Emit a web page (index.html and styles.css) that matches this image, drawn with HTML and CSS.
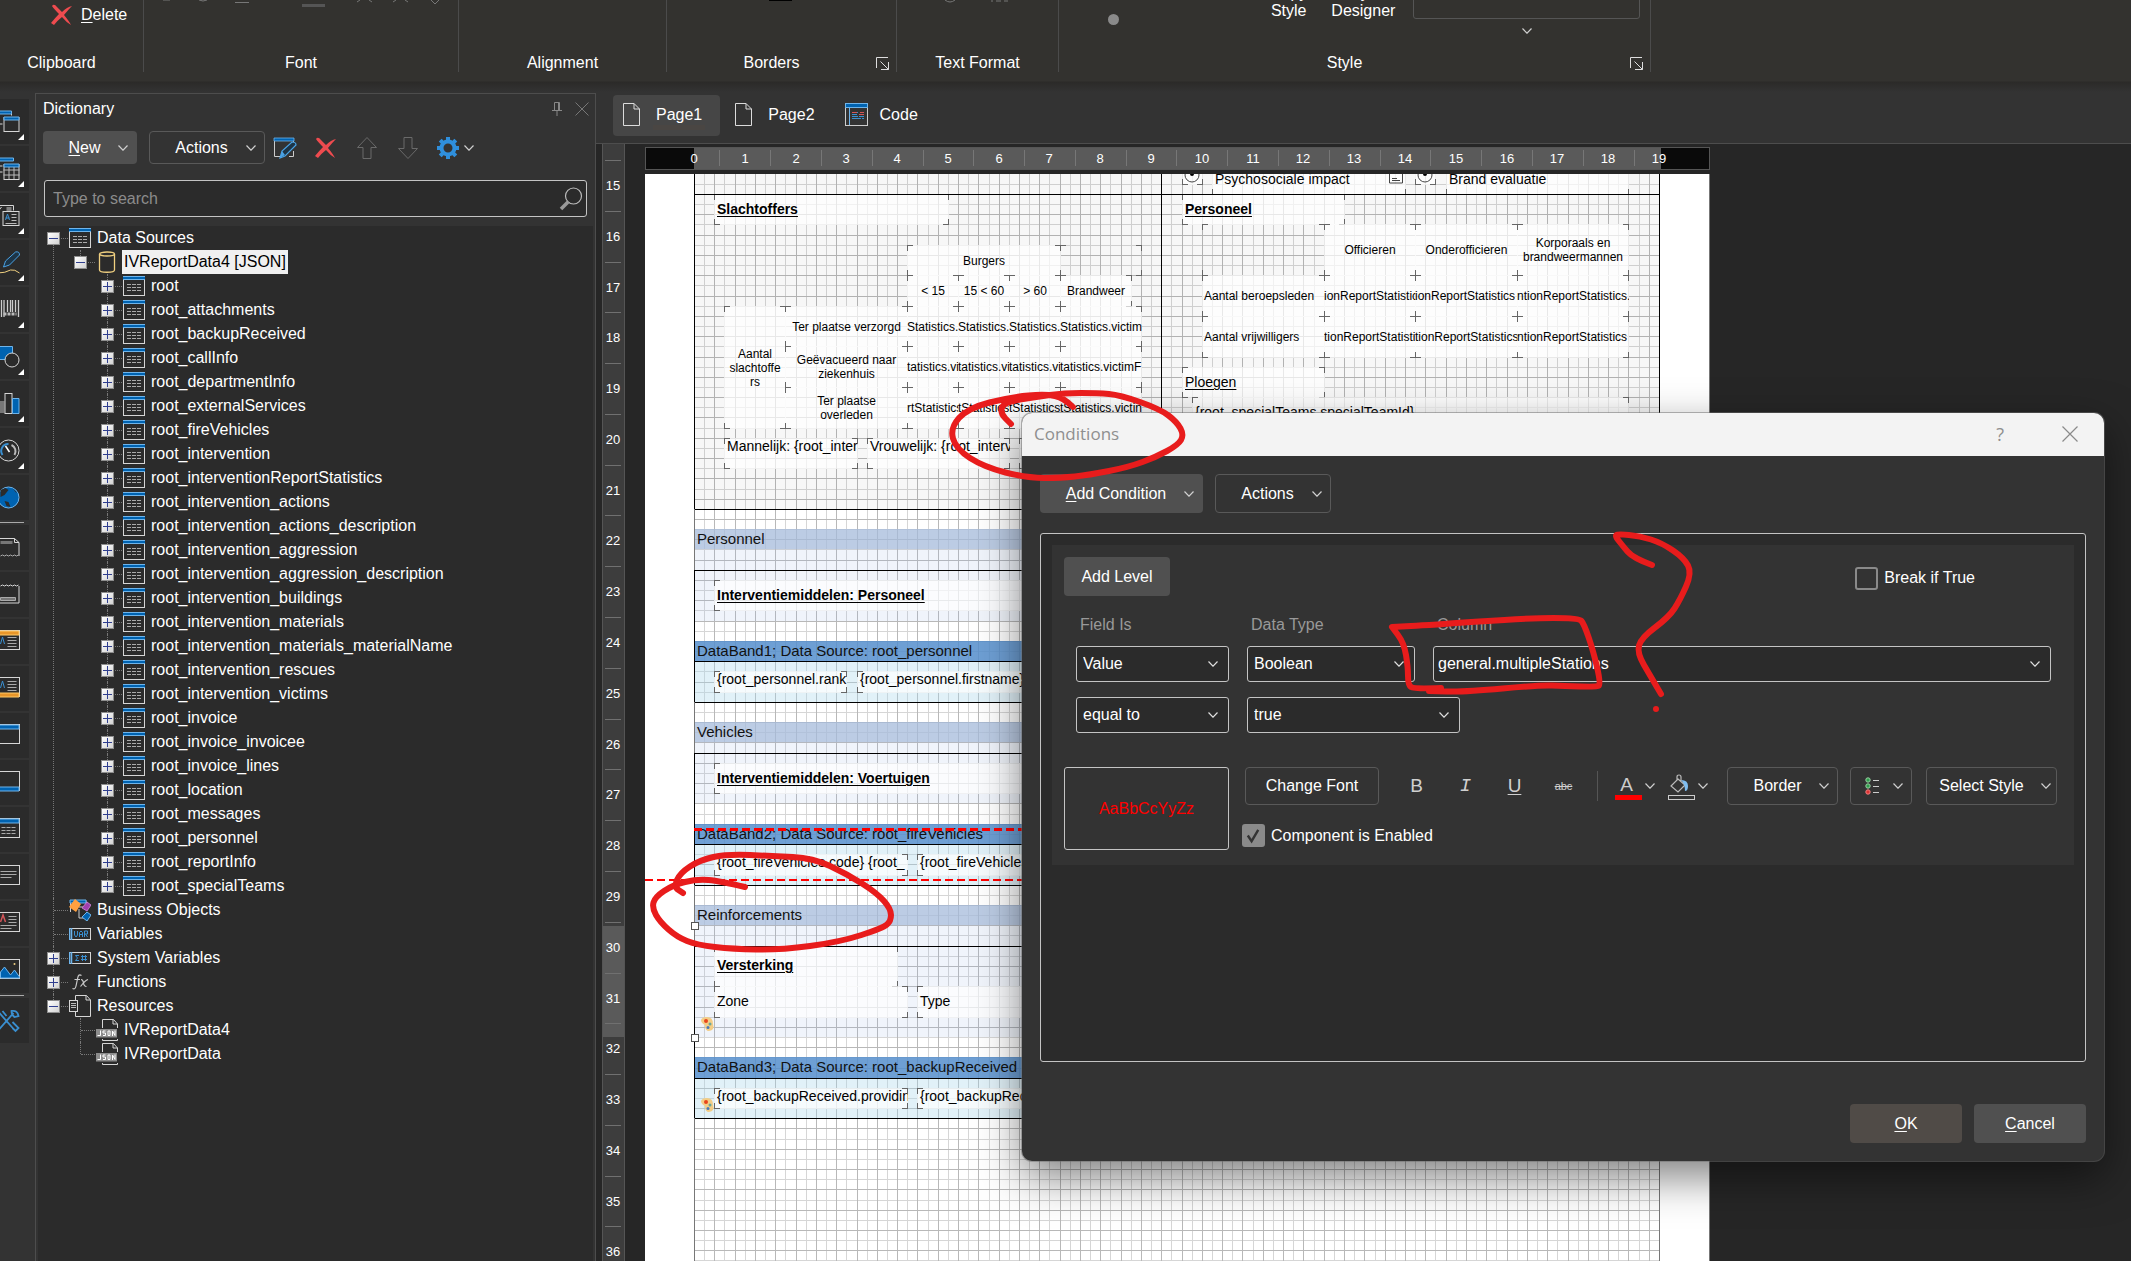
FILE: index.html
```html
<!DOCTYPE html>
<html lang="en">
<head>
    <meta charset="UTF-8">
    <meta name="viewport" content="width=device-width, initial-scale=1.0">
    <title>Report Designer - Conditions</title>
    <link rel="stylesheet" href="styles.css">
</head>
<body>
    <!-- Shared icons -->
    <svg class="sprite" aria-hidden="true">
        <symbol id="i-chevron" viewBox="0 0 10 6"><path d="M.5.5 5 5.2 9.5.5" fill="none" stroke="currentColor" stroke-width="1.2"/></symbol>
        <symbol id="i-cross" viewBox="0 0 22 22"><path d="M1 2Q3-1 6 3L11 8Q16 3 21 2 17 6 13 11 18 17 20 21 15 18 11 13 7 16 3 21L0 19Q4 14 8 10 3 5 1 2Z" fill="#ee4b4f"/></symbol>
        <symbol id="i-table" viewBox="0 0 22 22"><rect x=".5" y="1.5" width="21" height="19" fill="none" stroke="#d6d6d6"/><path d="M0 1h22v4H0z" fill="#0063b1"/><path d="M0 1.5h22M0 4.5h22" stroke="#6fb4ea"/><path d="M4 9.500h14M4 12.500h14M4 15.500h14" stroke="#aaa" stroke-dasharray="4 1"/></symbol>
        <symbol id="i-db" viewBox="0 0 22 22"><path d="M3.500 3v16c0 3 15 3 15 0V3" fill="none" stroke="#f0d080" stroke-width="1.3"/><ellipse cx="11" cy="3" rx="7.500" ry="2" fill="none" stroke="#f0d080" stroke-width="1.300"/></symbol>
        <symbol id="i-bo" viewBox="0 0 22 22"><path d="M1.500 13V1.500H17V4M10 10v9h6M10 8h6" fill="none" stroke="#ccc"/><path d="M1 1h16v3H1z" fill="#0063b1" stroke="#6fb4ea"/><path d="M6 0l6 5-5 8-7-5z" fill="#ffa040"/><path d="M18 3l4 3-4 6-5-3z" fill="#a03fae" stroke="#d58ade" stroke-width=".8"/><path d="M18 13l4 3-4 6-5-4z" fill="#0063b1" stroke="#6fb4ea"/></symbol>
        <symbol id="i-var" viewBox="0 0 22 22"><rect x=".5" y="5.500" width="21" height="11" fill="none" stroke="#d6d6d6"/><path d="M.5 5v12M2.500 5v12" stroke="#6fb4ea" stroke-width="1.500"/><path d="M5.500 8v4l1.500 2 1.500-2V8M10.500 14V9.500L12 8l1.500 1.500V14M10.500 11.500h3M15.500 14V8h3v3h-3m1 0 2 3" fill="none" stroke="#3a8fd0"/></symbol>
        <symbol id="i-sys" viewBox="0 0 22 22"><rect x=".5" y="5.500" width="21" height="11" fill="none" stroke="#d6d6d6"/><path d="M.5 5v12M2.500 5v12" stroke="#6fb4ea" stroke-width="1.500"/><path d="M10 8.500H6.500L8.500 11l-2 2.500H10M13.500 8v6M16.500 8v6M12 9.500h6M12 12.500h6" fill="none" stroke="#3a8fd0"/></symbol>
        <symbol id="i-fx" viewBox="0 0 22 22"><path d="M12.500 4.500Q9.500 2.500 8.700 7L7 15q-.8 4-3.500 2.500M5.500 8.500h5.500M12 8.500q2 0 2.500 3.500t3 3.500M19 8.500q-3 1-7.500 7" fill="none" stroke="#ccc" stroke-width="1.200"/></symbol>
        <symbol id="i-res" viewBox="0 0 22 22"><path d="M6.500 5V.5h11l4 4.500v16.500h-15V17M17 .5V5h4.500" fill="none" stroke="#d6d6d6"/><rect x=".5" y="5.500" width="8" height="11" fill="none" stroke="#d6d6d6"/><path d="M2 8.500h5M2 10.500h5M2 12.500h5" stroke="#bbb"/></symbol>
        <symbol id="i-json" viewBox="0 0 22 22"><path d="M6.500 9V.5h11l4 4.500v4M17 .5V5h4.500M6.500 20v1.500h15V20" fill="none" stroke="#d6d6d6"/><path d="M0 10h21v8.500H0z" fill="#8c8c8c"/><path d="M4.500 11.500v5h-3M9.500 12H7v2h2.500v2.500H7M12 12h2v4.500h-2zM16.500 17v-5l2.500 4.500v-5" fill="none" stroke="#fff"/></symbol>
        <symbol id="i-page" viewBox="0 0 17 23"><path d="M.5.5h10.500l5.500 5.500v16.500H.5zM11 .5V6h5.500" fill="none" stroke="#dcdcdc"/></symbol>
        <symbol id="i-launch" viewBox="0 0 13 13"><path d="M.5 11V.5H12M5 12.500h7.500V5M4.500 4.500l8 8" fill="none" stroke="#ddd"/></symbol>
        <symbol id="i-corner" viewBox="0 0 6 6"><path d="M6 0v6H0z" fill="#fff"/></symbol>
    </svg>

    <header class="ribbon">
        <section class="group clipboard">
            <button class="ribbon-btn"><svg width="22" height="22"><use href="#i-cross"/></svg><span><u>D</u>elete</span></button>
            <h2>Clipboard</h2>
        </section>
        <section class="group font">
            <svg class="cut-icons" width="300" height="10" aria-hidden="true"><path d="M19 0h7M55 0q4 2 8 0M91 2.500h14M216 0l-3 2M225 0l3 2M252 0l-3 2M261 0l3 2M287 0l4 4 4-4" fill="none" stroke="#777"/><path d="M158 4h23v3h-23z" fill="#555"/></svg>
            <h2>Font</h2>
        </section>
        <section class="group alignment"><h2>Alignment</h2></section>
        <section class="group borders">
            <svg class="cut-icons" width="200" height="4" aria-hidden="true"><path d="M102 0h23v1h-23z" fill="#000"/></svg>
            <h2>Borders</h2>
            <button class="launcher" aria-label="Border settings"><svg width="13" height="13"><use href="#i-launch"/></svg></button>
        </section>
        <section class="group format">
            <svg class="cut-icons" width="150" height="4" aria-hidden="true"><path d="M48 0q5 4 10 0M94 1h2M99 1h5M107 1h4" fill="none" stroke="#777"/></svg>
            <h2>Text Format</h2>
        </section>
        <section class="group style">
            <div class="style-tools">
                <span class="bullet"></span>
                <button>Copy<br>Style</button>
                <button>Style<br>Designer</button>
                <div class="gallery">
                    <div class="gallery-box"></div>
                    <svg class="chev" width="10" height="6"><use href="#i-chevron"/></svg>
                </div>
            </div>
            <h2>Style</h2>
            <button class="launcher" aria-label="Style settings"><svg width="13" height="13"><use href="#i-launch"/></svg></button>
        </section>
    </header>

    <main class="workspace">
        <nav class="toolbox" id="toolbox" aria-label="Toolbox"></nav>

        <aside class="dictionary">
            <div class="panel-title">
                <h1>Dictionary</h1>
                <svg width="10" height="14" viewBox="0 0 10 14"><path d="M2.500.5h5V8M2.500.5V8M0 8.500h10M5 9v5" fill="none" stroke="#888"/><path d="M6 1h1v7H6z" fill="#888"/></svg>
                <svg width="14" height="14" viewBox="0 0 14 14"><path d="M.5.5l13 13M13.500.5l-13 13" stroke="#777"/></svg>
            </div>
            <div class="panel-tools">
                <button class="btn solid new"><span><u>N</u>ew</span><svg class="chev" width="10" height="6"><use href="#i-chevron"/></svg></button>
                <button class="btn outline act"><span>Actions</span><svg class="chev" width="10" height="6"><use href="#i-chevron"/></svg></button>
                <button class="tool" aria-label="Edit"><svg width="24" height="24" viewBox="0 0 24 24"><path d="M9 20.500H1.500V3.500h19V6M20.500 15v5.500H16" fill="none" stroke="#ccc"/><path d="M1 2h20v3H1z" fill="#0063b1" stroke="#6fb4ea" stroke-width=".8"/><path d="M7 22l2-7L19 6q4 0 4 3L12 20z" fill="#1d3547" stroke="#4aa3e6" stroke-width="1.200"/><path d="M9 15l3 4-5 3z" fill="#4aa3e6"/></svg></button>
                <button class="tool" aria-label="Delete"><svg width="22" height="22"><use href="#i-cross"/></svg></button>
                <button class="tool" aria-label="Move up"><svg width="22" height="24" viewBox="0 0 22 24"><path d="M11 1.500l9.500 10H15v11H7v-11H1.500z" fill="none" stroke="#6a6a6a"/></svg></button>
                <button class="tool" aria-label="Move down"><svg width="22" height="24" viewBox="0 0 22 24"><path d="M11 22.500l9.500-10H15v-11H7v11H1.500z" fill="none" stroke="#6a6a6a"/></svg></button>
                <button class="tool gear" aria-label="Settings"><svg width="22" height="22" viewBox="-11 -11 22 22"><circle r="6.500" fill="none" stroke="#2f8fdc" stroke-width="4"/><path d="M0-11V-7M0 7V11M-11 0H-7M7 0H11M-7.800-7.800-5-5M5 5 7.800 7.800M7.800-7.800 5-5M-5 5-7.800 7.800" stroke="#2f8fdc" stroke-width="4"/></svg><svg class="chev" width="10" height="6"><use href="#i-chevron"/></svg></button>
            </div>
            <label class="search">
                <input type="search" placeholder="Type to search" aria-label="Type to search">
                <svg width="24" height="24" viewBox="0 0 24 24"><circle cx="14.500" cy="9" r="8" fill="none" stroke="#bbb" stroke-width="1.200"/><path d="M9 15l-7 7" stroke="#999" stroke-width="3.500"/></svg>
            </label>
            <div class="tree" id="tree"></div>
        </aside>

        <section class="designer">
            <div class="tabs">
                <button class="tab active"><svg width="17" height="23"><use href="#i-page"/></svg><span>Page1</span></button>
                <button class="tab"><svg width="17" height="23"><use href="#i-page"/></svg><span>Page2</span></button>
                <button class="tab code"><svg width="23" height="23" viewBox="0 0 23 23"><rect x=".5" y=".5" width="22" height="22" fill="none" stroke="#ccc"/><path d="M.5.500h22v4H.5z" fill="#0063b1" stroke="#6fb4ea"/><path d="M4.500 5v17" stroke="#6fb4ea"/><path d="M7 9.500h6M7 11.500h5M7 13.500h6M7 15.500h9M14 13.500h5M17 15.500h2" stroke="#3a8fd0"/><path d="M15 9.500h4M14 11.500h5M7 9.500h5" stroke="#d4565a"/></svg><span>Code</span></button>
            </div>
            <div class="surface">
                <svg class="v-ruler" id="vRuler" width="23" height="1117"></svg>
                <div class="canvas">
                    <svg class="h-ruler" id="hRuler" width="1065" height="23"></svg>
                    <div class="page" id="page"></div>
                </div>
            </div>
        </section>
    </main>

    <div class="dialog" role="dialog" aria-labelledby="dlgTitle">
        <div class="dialog-bar">
            <h2 id="dlgTitle">Conditions</h2>
            <button aria-label="Help">?</button>
            <button aria-label="Close"><svg width="16" height="16" viewBox="0 0 16 16"><path d="M.5.5l15 15M15.500.5l-15 15" stroke="#8a8a8a" stroke-width="1.200"/></svg></button>
        </div>
        <div class="dialog-body">
            <div class="row">
                <button class="btn tall solid add"><span><u>A</u>dd Condition</span><svg class="chev" width="10" height="6"><use href="#i-chevron"/></svg></button>
                <button class="btn tall outline act"><span>Actions</span><svg class="chev" width="10" height="6"><use href="#i-chevron"/></svg></button>
            </div>
            <div class="conditions">
                <div class="card">
                    <div class="row card-top">
                        <button class="btn tall solid level">Add Level</button>
                        <label class="check break"><input type="checkbox">Break if True</label>
                    </div>
                    <div class="fields">
                        <label for="fieldIs">Field Is</label>
                        <label for="dataType">Data Type</label>
                        <label for="column">Column</label>
                        <select id="fieldIs"><option>Value</option></select>
                        <select id="dataType"><option>Boolean</option></select>
                        <select id="column"><option>general.multipleStations</option></select>
                    </div>
                    <div class="fields second">
                        <select aria-label="Operation"><option>equal to</option></select>
                        <select aria-label="Value"><option>true</option></select>
                    </div>
                    <div class="format-row">
                        <div class="preview">AaBbCcYyZz</div>
                        <div class="format-tools">
                            <div class="row">
                                <button class="btn outline font-btn">Change Font</button>
                                <button class="glyph"><b>B</b></button>
                                <button class="glyph italic">I</button>
                                <button class="glyph"><u>U</u></button>
                                <button class="glyph strike"><s>abc</s></button>
                                <span class="divider"></span>
                                <button class="color"><span class="letter">A</span><svg class="chev" width="10" height="6"><use href="#i-chevron"/></svg></button>
                                <button class="color"><svg width="27" height="28" viewBox="0 0 27 28"><path d="M9 8V5q0-2 2-2t2 2v5M10 7l7 6-7 7-7-6z" fill="none" stroke="#bbb" stroke-width="1.200"/><path d="M13 8q7 0 7 6 0 5-3 5 0-7-4-11z" fill="#7fbdf0"/><rect x=".5" y="23.500" width="26" height="4" fill="none" stroke="#ccc"/></svg><svg class="chev" width="10" height="6"><use href="#i-chevron"/></svg></button>
                                <button class="btn outline border-btn"><span>Border</span><svg class="chev" width="10" height="6"><use href="#i-chevron"/></svg></button>
                                <button class="btn outline list-btn" aria-label="Icon set"><svg width="14" height="18" viewBox="0 0 14 18"><g stroke="#9bd0a5"><circle cx="3" cy="3" r="2.200" fill="#2f9e4b"/><circle cx="3" cy="9" r="2.200" fill="#2f9e4b"/></g><circle cx="3" cy="15" r="2.200" fill="#d33" stroke="#f08080"/><path d="M8 3.500h6M8 9.500h6M8 15.500h6" stroke="#ccc"/></svg><svg class="chev" width="10" height="6"><use href="#i-chevron"/></svg></button>
                                <button class="btn outline style-btn"><span>Select Style</span><svg class="chev" width="10" height="6"><use href="#i-chevron"/></svg></button>
                            </div>
                            <label class="check"><input type="checkbox" checked>Component is Enabled</label>
                        </div>
                    </div>
                </div>
            </div>
            <div class="dialog-actions">
                <button class="btn tall ok"><span><u>O</u>K</span></button>
                <button class="btn tall solid"><span><u>C</u>ancel</span></button>
            </div>
        </div>
    </div>

    <svg class="ink" id="ink" aria-hidden="true"></svg>

    <script src="script.js"></script>
</body>
</html>
```
FILE: styles.css
```css
* {
    box-sizing: border-box;
    margin: 0;
    padding: 0;
}
body {
    font: 16px/18px "Liberation Sans", Arial, sans-serif;
    background: #333;
    color: #fff;
    height: 100vh;
    overflow: hidden;
    display: flex;
    flex-direction: column;
    position: relative;
}
h1, h2 {
    font-size: 16px;
    font-weight: 400;
}
button {
    font: inherit;
    color: inherit;
    background: none;
    border: 0;
    white-space: nowrap;
}
svg {
    display: block;
    flex: none;
}
u {
    text-underline-offset: 2px;
}
.sprite {
    position: absolute;
    width: 0;
    height: 0;
}
.chev {
    color: #d0d0d0;
}

/* Ribbon */
.ribbon {
    height: 93px;
    flex: none;
    display: flex;
    background: linear-gradient(#33322f 81px, #2b2a28 82px, #333 92px);
}
.group {
    height: 72px;
    border-right: 1px solid #4b4b4b;
    display: flex;
    align-items: flex-end;
    justify-content: center;
    position: relative;
}
.clipboard { width: 144px; padding-right: 20px; }
.font { width: 315px; }
.alignment { width: 208px; }
.borders { width: 230px; padding-right: 20px; }
.format { width: 162px; }
.style { width: 592px; padding-right: 20px; }
.ribbon-btn {
    position: absolute;
    top: 4px;
    left: 51px;
    display: flex;
    gap: 8px;
    align-items: center;
}
.cut-icons {
    position: absolute;
    top: 0;
    left: 0;
}
.launcher {
    position: absolute;
    right: 7px;
    bottom: 2px;
}
.style-tools {
    position: absolute;
    top: -16px;
    left: 49px;
    right: 10px;
    display: flex;
}
.style-tools button {
    padding: 0 12px;
    line-height: 18px;
    height: 36px;
}
.bullet {
    width: 11px;
    height: 11px;
    border-radius: 50%;
    background: #8a8a8a;
    margin: 30px 139px 0 0;
}
.gallery {
    flex: 1;
    margin-left: 6px;
    color: #ccc;
}
.gallery-box {
    height: 35px;
    border: 1px solid #555;
    border-radius: 3px;
    margin-bottom: 9px;
}
.gallery .chev {
    margin: 0 auto;
}

/* Workspace */
.workspace {
    flex: 1;
    display: flex;
    min-height: 0;
}
.toolbox {
    width: 35px;
    padding-top: 6px;
    flex: none;
}
.tile {
    display: block;
    width: 29px;
    height: 45px;
    margin-bottom: 2px;
    background: #2b2b2b;
    position: relative;
}
.tile .more {
    position: absolute;
    left: 18px;
    top: 35px;
}
.tool-line {
    width: 24px;
    height: 1px;
    background: #aaa;
    margin: 1px 0 2px;
}

/* Dictionary */
.dictionary {
    width: 561px;
    flex: none;
    border: 1px solid #4d4d4d;
    border-bottom: 0;
    display: flex;
    flex-direction: column;
}
.panel-title {
    display: flex;
    align-items: center;
    gap: 13px;
    padding: 6px 6px 0 7px;
}
.panel-title h1 {
    flex: 1;
}
.panel-tools {
    display: flex;
    align-items: center;
    margin: 13px 0 16px 7px;
}
.btn {
    height: 33px;
    border-radius: 4px;
    display: flex;
    align-items: center;
    justify-content: center;
}
.btn.tall {
    height: 39px;
}
.solid {
    background: #505050;
}
.outline {
    border: 1px solid #595959;
}
.new {
    width: 94px;
    gap: 17px;
    padding-left: 16px;
    margin-right: 12px;
}
.act {
    width: 116px;
    gap: 18px;
    padding-left: 17px;
}
.tool {
    width: 24px;
    margin-left: 17px;
    display: flex;
    align-items: center;
    justify-content: center;
}
.act + .tool {
    margin-left: 8px;
}
.gear {
    width: 38px;
    gap: 5px;
    margin-left: 16px;
}
.search {
    display: flex;
    align-items: center;
    margin: 0 8px 9px 8px;
    height: 37px;
    border: 1px solid #c4c4c4;
    border-radius: 3px;
    background: #2b2b2b;
    padding: 0 3px 0 8px;
}
.search input {
    flex: 1;
    background: none;
    border: 0;
    outline: 0;
    font: inherit;
    color: #fff;
}
.search input::placeholder {
    color: #8c8c8c;
}
.tree {
    flex: 1;
    background: #2b2b2b;
    margin: 0 2px;
    padding-left: 9px;
    overflow: hidden;
}
.tree ul {
    list-style: none;
}
.tree ul ul {
    margin-left: 27px;
}
.tree li {
    position: relative;
}
.tree li::before {
    content: "";
    position: absolute;
    left: 6px;
    top: 0;
    bottom: 0;
    border-left: 1px dotted #777;
}
.tree li:last-child::before {
    bottom: auto;
    height: 12px;
}
.tree > ul > li:first-child::before {
    top: 12px;
}
.node {
    height: 24px;
    display: flex;
    align-items: center;
    position: relative;
    padding-left: 22px;
    gap: 4px;
}
.node::before {
    content: "";
    position: absolute;
    left: 7px;
    width: 14px;
    top: 12px;
    border-top: 1px dotted #777;
}
.toggle {
    position: absolute;
    left: 0;
    top: 6px;
    width: 13px;
    height: 13px;
    background: linear-gradient(#2f3e8f, #2f3e8f) 50% 50% / 9px 1px no-repeat, linear-gradient(135deg, #fff, #d2d2d2);
    border: 1px solid #8e8e8e;
}
.toggle.plus {
    background: linear-gradient(#2f3e8f, #2f3e8f) 50% 50% / 9px 1px no-repeat, linear-gradient(#2f3e8f, #2f3e8f) 50% 50% / 1px 9px no-repeat, linear-gradient(135deg, #fff, #d2d2d2);
}
.node span {
    padding: 0 2px;
    line-height: 24px;
}
.node .selected {
    background: #f0f0f0;
    color: #000;
}

/* Designer */
.designer {
    flex: 1;
    min-width: 0;
    display: flex;
    flex-direction: column;
}
.tabs {
    height: 51px;
    border-bottom: 1px solid #4d4d4d;
    display: flex;
    padding: 2px 0 0 17px;
    gap: 5px;
}
.tab {
    height: 41px;
    padding: 0 18px 2px 10px;
    border-radius: 4px;
    display: flex;
    align-items: center;
    gap: 16px;
}
.tab.active {
    background: linear-gradient(#4a4643, #4a4643) 40px 30px / 52px 5px no-repeat, #464646;
}
.tab.code {
    gap: 12px;
    padding-left: 7px;
}
.surface {
    flex: 1;
    min-height: 0;
    overflow: hidden;
    background: #262626;
    display: flex;
    gap: 20px;
    padding-left: 6px;
}
.canvas {
    display: flex;
    flex-direction: column;
    padding-top: 3px;
    gap: 4px;
}
.page {
    flex: 1;
    background: #fff;
    border-right: 1px solid #777;
    position: relative;
    overflow: hidden;
    color: #000;
    font-size: 14px;
    line-height: 16px;
}
.band, .comp, .page svg, .rule {
    position: absolute;
}
.band {
    font-size: 15px;
    line-height: 19px;
    padding-left: 3px;
    white-space: nowrap;
    color: #111;
}
.band.panel { background: rgba(60, 60, 60, 0.04); }
.band.group-head { background: rgba(166, 187, 219, 0.75); }
.band.group-body { background: rgba(150, 175, 225, 0.14); }
.band.data-head { background: rgba(85, 142, 205, 0.85); }
.band.data-body { background: rgba(170, 215, 235, 0.35); }
.rule { background: #000; }
.rule.soft { background: #777; }
.comp {
    overflow: hidden;
    white-space: nowrap;
    background: rgba(255, 255, 255, 0.7);
    padding: 7px 3px 0;
}
.comp::after {
    content: "";
    position: absolute;
    inset: 0;
    --c: linear-gradient(#666, #666);
    background:
        var(--c) 0 0 / 6px 1px, var(--c) 0 0 / 1px 6px,
        var(--c) 100% 0 / 6px 1px, var(--c) 100% 0 / 1px 6px,
        var(--c) 0 100% / 6px 1px, var(--c) 0 100% / 1px 6px,
        var(--c) 100% 100% / 6px 1px, var(--c) 100% 100% / 1px 6px;
    background-repeat: no-repeat;
}
.comp.empty {
    background: none;
}
.comp.title {
    font-weight: 700;
    text-decoration: underline;
    text-underline-offset: 2px;
}
.comp.low {
    padding-top: 11px;
}
.comp.under {
    text-decoration: underline;
    text-underline-offset: 2px;
}
.comp.line {
    padding: 0 3px;
}
.comp.cell, .comp.data, .comp.left {
    font-size: 12px;
    line-height: 14px;
    display: flex;
    align-items: center;
    justify-content: center;
    text-align: center;
    padding: 0;
}
.comp.cell {
    white-space: pre-line;
}
.comp.data, .comp.left {
    justify-content: flex-start;
}
.comp.left {
    padding-left: 2px;
}
.cutline {
    position: absolute;
    background: repeating-linear-gradient(90deg, #f00 0 8px, transparent 8px 12px);
}
.handle {
    position: absolute;
    width: 8px;
    height: 8px;
    background: #fff;
    border: 1px solid #555;
}

/* Conditions dialog */
.dialog {
    position: absolute;
    left: 1022px;
    top: 413px;
    width: 1082px;
    background: #333;
    border-radius: 10px;
    overflow: hidden;
    box-shadow: 0 0 0 1px rgba(110, 110, 110, 0.5), 0 16px 44px rgba(0, 0, 0, 0.5);
}
.dialog-bar {
    height: 43px;
    background: #f3f3f3;
    color: #8f8f8f;
    display: flex;
    align-items: center;
    padding: 0 26px 2px 12px;
    font-family: "Open Sans", sans-serif;
}
.dialog-bar h2 {
    flex: 1;
    font-size: 17px;
}
.dialog-bar button {
    margin-left: 58px;
    font-size: 18px;
}
.dialog-body {
    padding: 18px 18px;
}
.row {
    display: flex;
    align-items: center;
}
.add {
    width: 163px;
    gap: 18px;
    padding-left: 17px;
    margin-right: 12px;
}
.conditions {
    margin: 20px 0 42px;
    height: 529px;
    border: 1px solid #c4c4c4;
    border-radius: 3px;
    background: #2b2b2b;
    padding: 11px;
}
.card {
    background: #333;
    padding: 12px 12px 15px;
}
.level {
    width: 106px;
}
.check {
    display: flex;
    align-items: center;
    gap: 6px;
}
.check input {
    appearance: none;
    width: 23px;
    height: 23px;
    border: 2px solid #8a8a8a;
    border-radius: 3px;
}
.check input:checked {
    background: #8a8a8a url("data:image/svg+xml,%3Csvg xmlns='http://www.w3.org/2000/svg' viewBox='0 0 20 20'%3E%3Cpath d='M4 10l4 6L15 4' fill='none' stroke='%23333' stroke-width='2.500'/%3E%3C/svg%3E");
}
.card-top {
    justify-content: space-between;
}
.break {
    margin-right: 87px;
    padding-top: 3px;
}
.fields {
    display: grid;
    grid-template-columns: 153px 168px 1fr;
    column-gap: 18px;
    row-gap: 12px;
    padding: 20px 11px 0 12px;
    color: #999;
}
.fields.second {
    grid-template-columns: 153px 213px;
    padding-top: 15px;
}
.fields label {
    padding-left: 4px;
}
select {
    appearance: none;
    height: 36px;
    font: inherit;
    color: #fff;
    border: 1px solid #c4c4c4;
    border-radius: 3px;
    padding: 0 6px;
    background: #2b2b2b url("data:image/svg+xml,%3Csvg xmlns='http://www.w3.org/2000/svg' width='10' height='6'%3E%3Cpath d='M.5.5 5 5.200 9.500.5' fill='none' stroke='%23ddd' stroke-width='1.200'/%3E%3C/svg%3E") no-repeat right 10px center;
}
#column {
    padding-left: 4px;
}
.format-row {
    display: flex;
    gap: 13px;
    margin-top: 34px;
}
.preview {
    width: 165px;
    height: 83px;
    border: 1px solid #c4c4c4;
    border-radius: 3px;
    display: flex;
    align-items: center;
    justify-content: center;
    color: #f00;
}
.format-tools .row {
    margin: 0 0 19px 3px;
}
.format-tools .btn {
    height: 38px;
}
.font-btn {
    width: 134px;
    margin-right: 13px;
}
.glyph {
    width: 49px;
    height: 38px;
    font: 19px/24px "Liberation Sans", Arial, sans-serif;
    color: #d0d0d0;
}
.glyph b {
    font-weight: 500;
}
.italic {
    font: italic 19px/24px "Liberation Mono", monospace;
}
.strike {
    font-size: 11px;
}
.divider {
    height: 30px;
    border-left: 1px solid #555;
    margin: 0 17px 0 9px;
}
.color {
    display: flex;
    align-items: center;
    gap: 3px;
    margin-right: 13px;
}
.letter {
    width: 27px;
    height: 28px;
    padding-right: 4px;
    line-height: 26px;
    font-size: 19px;
    color: #ccc;
    border-bottom: 5px solid #f00;
}
.border-btn {
    width: 111px;
    gap: 17px;
    padding-left: 17px;
    margin: 0 12px 0 6px;
}
.list-btn {
    width: 62px;
    gap: 14px;
    margin-right: 14px;
    padding-left: 6px;
}
.style-btn {
    width: 131px;
    gap: 17px;
    padding-left: 7px;
}
.dialog-actions {
    display: flex;
    justify-content: flex-end;
    gap: 12px;
}
.dialog-actions .btn {
    width: 112px;
}
.ok {
    background: #504b47;
}

/* Pen marks over everything */
.ink {
    position: absolute;
    left: 0;
    top: 0;
    width: 100%;
    height: 100%;
    pointer-events: none;
}
.ink path {
    fill: none;
    stroke: #e81c1c;
    stroke-width: 6;
    stroke-linecap: round;
    stroke-linejoin: round;
}
```
FILE: script.js
```js
const GRID = 10.157;      // 0.2 cm in pixels
const CM = GRID * 5;
const ORIGIN_X = 49;      // left page margin
const ORIGIN_Y = 20;      // first panel below the page top
const gx = u => Math.round(ORIGIN_X + u * GRID);
const gy = u => Math.round(ORIGIN_Y + u * GRID);

// ---- Toolbox ----
const win = '<rect x="-6" y="-.5" width="25" height="19" fill="none" stroke="#d6d6d6"/>';
const tools = [
    ['<path d="M-4 .5h15v4M-4 13h6" fill="none" stroke="#d6d6d6"/><path d="M-4 0h15v3H-4z" fill="#0063b1" stroke="#6fb4ea"/><rect x="3.500" y="6.500" width="15" height="14" fill="#2b2b2b" stroke="#d6d6d6"/><path d="M3.500 6h15v3h-15z" fill="#0063b1" stroke="#6fb4ea"/>', 1],
    ['<path d="M-4 0h17v3H-4z" fill="#0063b1" stroke="#6fb4ea"/><path d="M-4 8h6M-4 14h6" stroke="#d6d6d6"/><rect x="3.500" y="6.500" width="15" height="15" fill="#2b2b2b" stroke="#d6d6d6"/><path d="M3 12h16M3 17h16M8.500 9v12M13.500 9v12" stroke="#bbb"/><path d="M3.500 6h15v3h-15z" fill="#0063b1" stroke="#6fb4ea"/>', 1],
    ['<path d="M-4 .5h17v5M6 3h5M6 5h5M-2 6l3-4" fill="none" stroke="#d6d6d6"/><rect x="2.500" y="6.500" width="16" height="14" fill="#2b2b2b" stroke="#d6d6d6"/><path d="M5 15l2-6 2 6M5 13h4" fill="none" stroke="#3a8fd0"/><path d="M11 9.500h5M11 12.500h5M11 15.500h5M5 18.500h11" stroke="#bbb"/>', 1],
    ['<path d="M3 15l2-6 10-9q4-1 4 3L9 13z" fill="#1d3547" stroke="#4aa3e6"/><path d="M-3 21q8 0 13-3 4-1 9 3" fill="none" stroke="#f0d080"/>', 1],
    ['<path d="M1 1v17M3.500 1v17M7 1v12M10 1v12M12 1v12M15 1v12M18 1v17" stroke="#ccc" stroke-width="1.300"/><path d="M3 15h13" stroke="#bbb" stroke-width="3" stroke-dasharray="3 1"/>', 1],
    ['<path d="M-4 .5h16v13H-4z" fill="#0063b1" stroke="#6fb4ea"/><circle cx="11.500" cy="14" r="7" fill="#2b2b2b" stroke="#d6d6d6"/>', 1],
    ['<path d="M-3 8h7v12h-7z" fill="#777"/><rect x="4.500" y=".5" width="7" height="20" fill="#2b2b2b" stroke="#d6d6d6"/><path d="M12 5.500h6.500v15H12z" fill="#0063b1" stroke="#6fb4ea"/>', 1],
    ['<circle cx="8" cy="10.500" r="10.500" fill="none" stroke="#d6d6d6"/><path d="M2 15a7 7 0 0 1 6-11" fill="none" stroke="#3a8fd0" stroke-width="2"/><path d="M11 5a7 7 0 0 1 3 10" fill="none" stroke="#bbb" stroke-width="2"/><path d="M5 6l4 6" stroke="#fff" stroke-width="1.500"/>', 1],
    ['<circle cx="8" cy="10.500" r="10.500" fill="#0063b1" stroke="#6fb4ea"/><path d="M0 3l5-2 3 2-4 5-4 2zM4 14l4 1 2 5-4-1zM12 1l5 5-2-1z" fill="#2b2b2b"/>', 0],
    'line',
    ['<path d="M-4 1.500h18l4.500 4V19M14 1.500v4h4.500" fill="none" stroke="#d6d6d6"/><path d="M0 4h12v3H0z" fill="#777"/><path d="M0 19l2-1 2 1 2-1 2 1 2-1 2 1 2-1 2 1 2-1" fill="none" stroke="#aaa"/>', 0],
    ['<path d="M0 2l2-1 2 1 2-1 2 1 2-1 2 1 2-1 2 1 2-1M18.500 2v17H-2" fill="none" stroke="#d6d6d6"/><path d="M0 13.500h15v3H0z" fill="#777" stroke="#aaa"/>', 0],
    [win + '<path d="M-2 0h20.500v4H-2z" fill="#e8962a" stroke="#ffc966"/><path d="M7 6.500h9M7 9.500h9M7 12.500h9M7 15.500h9" stroke="#aaa"/><path d="M0 13l2-7 2 7" fill="none" stroke="#3a8fd0"/>', 0],
    [win + '<path d="M-2 15h20.500v4H-2z" fill="#e8962a" stroke="#ffc966"/><path d="M7 3.500h9M7 6.500h9M7 9.500h9M7 12.500h9" stroke="#aaa"/><path d="M0 10l2-7 2 7" fill="none" stroke="#3a8fd0"/>', 0],
    [win + '<path d="M-2 0h20.500v4H-2z" fill="#0063b1" stroke="#6fb4ea"/>', 0],
    [win + '<path d="M-2 15h20.500v4H-2z" fill="#0063b1" stroke="#6fb4ea"/>', 0],
    [win + '<path d="M-2 0h20.500v4H-2z" fill="#0063b1" stroke="#6fb4ea"/><path d="M1 8.500h15M1 11.500h15M1 14.500h15" stroke="#aaa" stroke-dasharray="4 1"/>', 0],
    [win + '<path d="M0 5.500h16M0 8.500h16M0 11.500h11" stroke="#aaa"/>', 0],
    [win + '<path d="M0 9l2.500-7L5 9" fill="none" stroke="#d4565a" stroke-width="1.500"/><path d="M8 3.500h8M8 6.500h8M8 9.500h8M0 12.500h16M0 15.500h11" stroke="#aaa"/>', 0],
    [win + '<path d="M0 12l4-5 6 8 4-5 5 7v1H0z" fill="#0063b1" stroke="#6fb4ea"/><circle cx="14" cy="4" r="1" fill="#f0d080"/>', 0],
    'line',
    ['<path d="M-2 2l16 18M-2 20L13 3M11 1q6-1 7 5l-4 1q-3-2-3-6zM2 1l4 5M12 18l3 3 3-3-6-6" fill="none" stroke="#3a8fd0" stroke-width="1.800"/>', 0]
];
document.getElementById('toolbox').innerHTML = tools.map(t => t === 'line'
    ? '<div class="tool-line"></div>'
    : `<button class="tile" aria-label="Component"><svg width="29" height="45" viewBox="-.5 -12 29 45">${t[0]}</svg>${t[1] ? '<svg class="more" width="6" height="6"><use href="#i-corner"/></svg>' : ''}</button>`
).join('');

// ---- Dictionary tree ----
const tables = ['root', 'root_attachments', 'root_backupReceived', 'root_callInfo', 'root_departmentInfo',
    'root_externalServices', 'root_fireVehicles', 'root_intervention', 'root_interventionReportStatistics',
    'root_intervention_actions', 'root_intervention_actions_description', 'root_intervention_aggression',
    'root_intervention_aggression_description', 'root_intervention_buildings', 'root_intervention_materials',
    'root_intervention_materials_materialName', 'root_intervention_rescues', 'root_intervention_victims',
    'root_invoice', 'root_invoice_invoicee', 'root_invoice_lines', 'root_location', 'root_messages',
    'root_personnel', 'root_reportInfo', 'root_specialTeams'];
const tree = [
    { t: 'Data Sources', i: 'table', x: 'minus', c: [
        { t: 'IVReportData4 [JSON]', i: 'db', x: 'minus', sel: true, c: tables.map(t => ({ t, i: 'table', x: 'plus' })) }
    ] },
    { t: 'Business Objects', i: 'bo' },
    { t: 'Variables', i: 'var' },
    { t: 'System Variables', i: 'sys', x: 'plus' },
    { t: 'Functions', i: 'fx', x: 'plus' },
    { t: 'Resources', i: 'res', x: 'minus', c: [{ t: 'IVReportData4', i: 'json' }, { t: 'IVReportData', i: 'json' }] }
];
function renderTree(nodes) {
    return '<ul>' + nodes.map(n => `<li><div class="node">${n.x ? `<i class="toggle ${n.x}"></i>` : ''}<svg width="22" height="22"><use href="#i-${n.i}"/></svg><span${n.sel ? ' class="selected"' : ''}>${n.t}</span></div>${n.c ? renderTree(n.c) : ''}</li>`).join('') + '</ul>';
}
document.getElementById('tree').innerHTML = renderTree(tree);

// ---- Rulers ----
let h = '<rect x=".5" y=".5" width="1064" height="22" fill="#5a5a5a" stroke="#555"/><path d="M1 1h48v21H1zM1016 1h48v21h-48z" fill="#0a0a0a"/>';
for (let i = 0; i <= 19; i++) {
    h += `<text x="${Math.round(ORIGIN_X + i * CM)}" y="16" text-anchor="middle">${i}</text>`;
    if (i < 19) h += `<rect x="${Math.round(ORIGIN_X + (i + .5) * CM)}" y="3" width="1" height="16" fill="#777"/>`;
}
document.getElementById('hRuler').innerHTML = `<g fill="#fff" font-size="13">${h}</g>`;

let v = '<rect width="23" height="1117" fill="#3d3d3d"/><rect y="782" width="23" height="111" fill="#5a5a5a"/><path d="M.5 0v1117M22.500 0v1117" stroke="#555"/>';
for (let i = 0; i <= 21; i++) {
    const y = Math.round(41 + i * CM);
    v += `<text x="11" y="${y + 5}" text-anchor="middle">${i + 15}</text><rect x="3" y="${Math.round(y - CM / 2)}" width="16" height="1" fill="#707070"/>`;
}
document.getElementById('vRuler').innerHTML = `<g fill="#fff" font-size="13">${v}</g>`;

// ---- Report page ----
const page = document.getElementById('page');
function add(cls, x, y, w, hgt, html) {
    const el = document.createElement('div');
    el.className = cls;
    el.style.left = x + 'px';
    el.style.top = y + 'px';
    if (w) el.style.width = w + 'px';
    if (hgt) el.style.height = hgt + 'px';
    el.innerHTML = html || '';
    page.appendChild(el);
}

let light = '', dark = '';
for (let u = 0; u <= 95; u++) {
    const d = `M${gx(u)}.5 0V1100`;
    if (u % 2) light += d; else dark += d;
}
for (let u = -1; u <= 106; u++) {
    const d = `M49 ${gy(u)}.5H1015`;
    if (u % 2) light += d; else dark += d;
}
page.innerHTML = `<svg width="1065" height="1100" shape-rendering="crispEdges"><path d="${light}" stroke="#d6d6d6"/><path d="${dark}" stroke="#b8b8b8"/></svg>`;

// bands: class, top, bottom, caption (grid units)
const bands = [
    ['panel', -2, 31, ''],
    ['group-head', 33, 35, 'Personnel'], ['group-body', 35, 42, ''],
    ['data-head', 44, 46, 'DataBand1; Data Source: root_personnel'], ['data-body', 46, 50, ''],
    ['group-head', 52, 54, 'Vehicles'], ['group-body', 54, 60, ''],
    ['data-head', 62, 64, 'DataBand2; Data Source: root_fireVehicles'], ['data-body', 64, 68, ''],
    ['group-head', 70, 72, 'Reinforcements'], ['group-body', 72, 83, ''],
    ['data-head', 85, 87, 'DataBand3; Data Source: root_backupReceived'], ['data-body', 87, 91, '']
];
bands.forEach(([c, t, b, s]) => add('band ' + c, gx(0), gy(t), gx(95) - gx(0), gy(b) - gy(t), s));

// components: x1, y1, x2, y2, class, text (grid units)
const comps = [
    [48, -3, 50, -1, '', ''], [51, -3, 70, 0, '', 'Psychosociale impact'],
    [71, -3, 73, -1, '', ''], [74, -3, 92, 0, '', 'Brand evaluatie'],
    [2, 0, 25, 3, 'title', 'Slachtoffers'],
    [21, 5, 36, 8, 'cell', 'Burgers'], [36, 5, 44, 8, 'empty', ''],
    [21, 8, 26, 11, 'cell', '&lt; 15'], [26, 8, 31, 11, 'cell', '15 &lt; 60'], [31, 8, 36, 11, 'cell', '&gt; 60'], [36, 8, 43, 11, 'cell', 'Brandweer'],
    [3, 11, 9, 23, 'cell', 'Aantal\nslachtoffe\nrs'],
    [9, 11, 21, 15, 'cell', 'Ter plaatse verzorgd'], [9, 15, 21, 19, 'cell', 'Geëvacueerd naar\nziekenhuis'], [9, 19, 21, 23, 'cell', 'Ter plaatse\noverleden'],
    [21, 11, 26, 15, 'data', 'Statistics.'], [26, 11, 31, 15, 'data', 'Statistics.'], [31, 11, 36, 15, 'data', 'Statistics.'], [36, 11, 44, 15, 'data', 'Statistics.victim'],
    [21, 15, 26, 19, 'data', 'tatistics.vi'], [26, 15, 31, 19, 'data', 'tatistics.vi'], [31, 15, 36, 19, 'data', 'tatistics.vi'], [36, 15, 44, 19, 'data', 'tatistics.victimF'],
    [21, 19, 26, 23, 'data', 'rtStatistics'], [26, 19, 31, 23, 'data', 'tStatistics'], [31, 19, 36, 23, 'data', 'tStatistics'], [36, 19, 44, 23, 'data', 'tStatistics.victin'],
    [3, 24, 16, 27, 'line', 'Mannelijk: {root_inter'], [17, 24, 31, 27, 'line', 'Vrouwelijk: {root_interv'], [32, 24, 44, 27, '', ''],
    [48, 0, 64, 3, 'title', 'Personeel'],
    [50, 3, 62, 8, 'empty', ''], [62, 3, 71, 8, 'cell', 'Officieren'], [71, 3, 81, 8, 'cell', 'Onderofficieren'], [81, 3, 92, 8, 'cell', 'Korporaals en\nbrandweermannen'],
    [50, 8, 62, 12, 'left', 'Aantal beroepsleden'], [62, 8, 71, 12, 'data', 'ionReportStatistic'], [71, 8, 81, 12, 'data', 'ionReportStatistics'], [81, 8, 92, 12, 'data', 'ntionReportStatistics.'],
    [50, 12, 62, 16, 'left', 'Aantal vrijwilligers'], [62, 12, 71, 16, 'data', 'tionReportStatisti'], [71, 12, 81, 16, 'data', 'tionReportStatistics'], [81, 12, 92, 16, 'data', 'ntionReportStatistics'],
    [48, 17, 62, 20, 'under', 'Ploegen'], [49, 20, 92, 23, '', '{root_specialTeams.specialTeamId}'],
    [2, 38, 40, 41, 'title', 'Interventiemiddelen: Personeel'],
    [2, 47, 15, 49, 'line', '{root_personnel.rank'], [16, 47, 40, 49, 'line', '{root_personnel.firstname}'],
    [2, 56, 40, 59, 'title', 'Interventiemiddelen: Voertuigen'],
    [2, 65, 21, 67, 'line', '{root_fireVehicles.code} {root_'], [22, 65, 40, 67, 'line', '{root_fireVehicles.type}'],
    [2, 74, 20, 78, 'title low', 'Versterking'],
    [2, 78, 21, 81, '', 'Zone'], [22, 78, 40, 81, '', 'Type'],
    [2, 88, 21, 90, 'line', '{root_backupReceived.providin'], [22, 88, 40, 90, 'line', '{root_backupReceived.type}']
];
comps.forEach(([x1, y1, x2, y2, c, s]) => add('comp ' + c, gx(x1), gy(y1), gx(x2) - gx(x1) + 1, gy(y2) - gy(y1) + 1, s));

// black band borders
const left = gx(0), width = gx(95) - left;
[0, 31, 37, 46, 50, 55, 64, 68, 74, 87, 91].forEach(u => add('rule', left, gy(u), width, 1));
[[-2, 31], [37, 50], [55, 68], [74, 91]].forEach(([a, b]) => {
    add('rule', left, gy(a), 1, gy(b) - gy(a));
    add('rule', gx(95), gy(a), 1, gy(b) - gy(a));
});
[[31, 37], [50, 55], [68, 74], [91, 107]].forEach(([a, b]) => {
    add('rule soft', left, gy(a), 1, gy(b) - gy(a));
    add('rule soft', gx(95), gy(a), 1, gy(b) - gy(a));
});
add('rule', gx(46), 0, 1, gy(31));

// radio and list marks, palettes
page.insertAdjacentHTML('beforeend', `<svg width="1065" height="1000" fill="none">
    <g stroke="#444"><circle cx="547" cy="1" r="7"/><circle cx="780" cy="1" r="7"/><path d="M744.500-1v10h13V-1M747 4.500h5M747 6.500h8"/></g>
    <g fill="#000"><circle cx="547" cy="0" r="2"/><circle cx="780" cy="0" r="2"/></g>
    ${[843, 924].map(y => `<g transform="translate(56 ${y})"><path d="M6 0q6 0 6 7 2 6-4 7-4 0-4-6-4-2-4-5 1-3 6-3z" fill="#f3cd86"/><circle cx="5" cy="4" r="2" fill="#e8441c"/><circle cx="9" cy="7" r="1.500" fill="#6aa79a"/><circle cx="7" cy="10.500" r="1.500" fill="#4a7ab8"/></g>`).join('')}
</svg>`);

add('cutline', 49, 654, 966, 3);
add('cutline', 0, 705, 1065, 2);
add('handle', 46, 748);
add('handle', 46, 860);

// ---- Pen marks ----
const strokes = [
    [[1073,407],[1064,398],[1046,394],[1011,397],[968,408],[950,428],[956,449],[984,467],[1027,478],[1061,478],[1089,475],[1129,467],[1156,457],[1178,445],[1184,435],[1177,422],[1160,409],[1120,395],[1098,393],[1064,393],[1036,397],[1004,402],[1000,413],[1011,424]],
    [[745,887],[720,881],[697,879],[673,885],[655,897],[652,908],[660,922],[677,937],[697,945],[733,949],[780,950],[840,942],[883,928],[891,921],[891,909],[877,893],[847,874],[813,858],[773,856],[727,854],[700,860],[680,873],[674,887],[683,893]],
    [[1441,688],[1414,689],[1408,685],[1408,667],[1404,643],[1392,627],[1392,627],[1430,625],[1528,618],[1579,618],[1584,624],[1593,650],[1601,684],[1597,687],[1564,686],[1540,685],[1465,692],[1429,691]],
    [[1652,565],[1633,558],[1622,545],[1615,536],[1618,534],[1640,536],[1662,543],[1684,558],[1692,573],[1680,600],[1669,617],[1641,638],[1637,653],[1651,677],[1661,694]],
    [[1656,709],[1656,709]]
];
// quadratic through the midpoints keeps the line smooth
document.getElementById('ink').innerHTML = strokes.map(p => {
    let d = `M${p[0]}`;
    for (let i = 1; i < p.length - 1; i++) {
        d += `Q${p[i]} ${(p[i][0] + p[i + 1][0]) / 2},${(p[i][1] + p[i + 1][1]) / 2}`;
    }
    return `<path d="${d}L${p[p.length - 1]}"/>`;
}).join('');
```
